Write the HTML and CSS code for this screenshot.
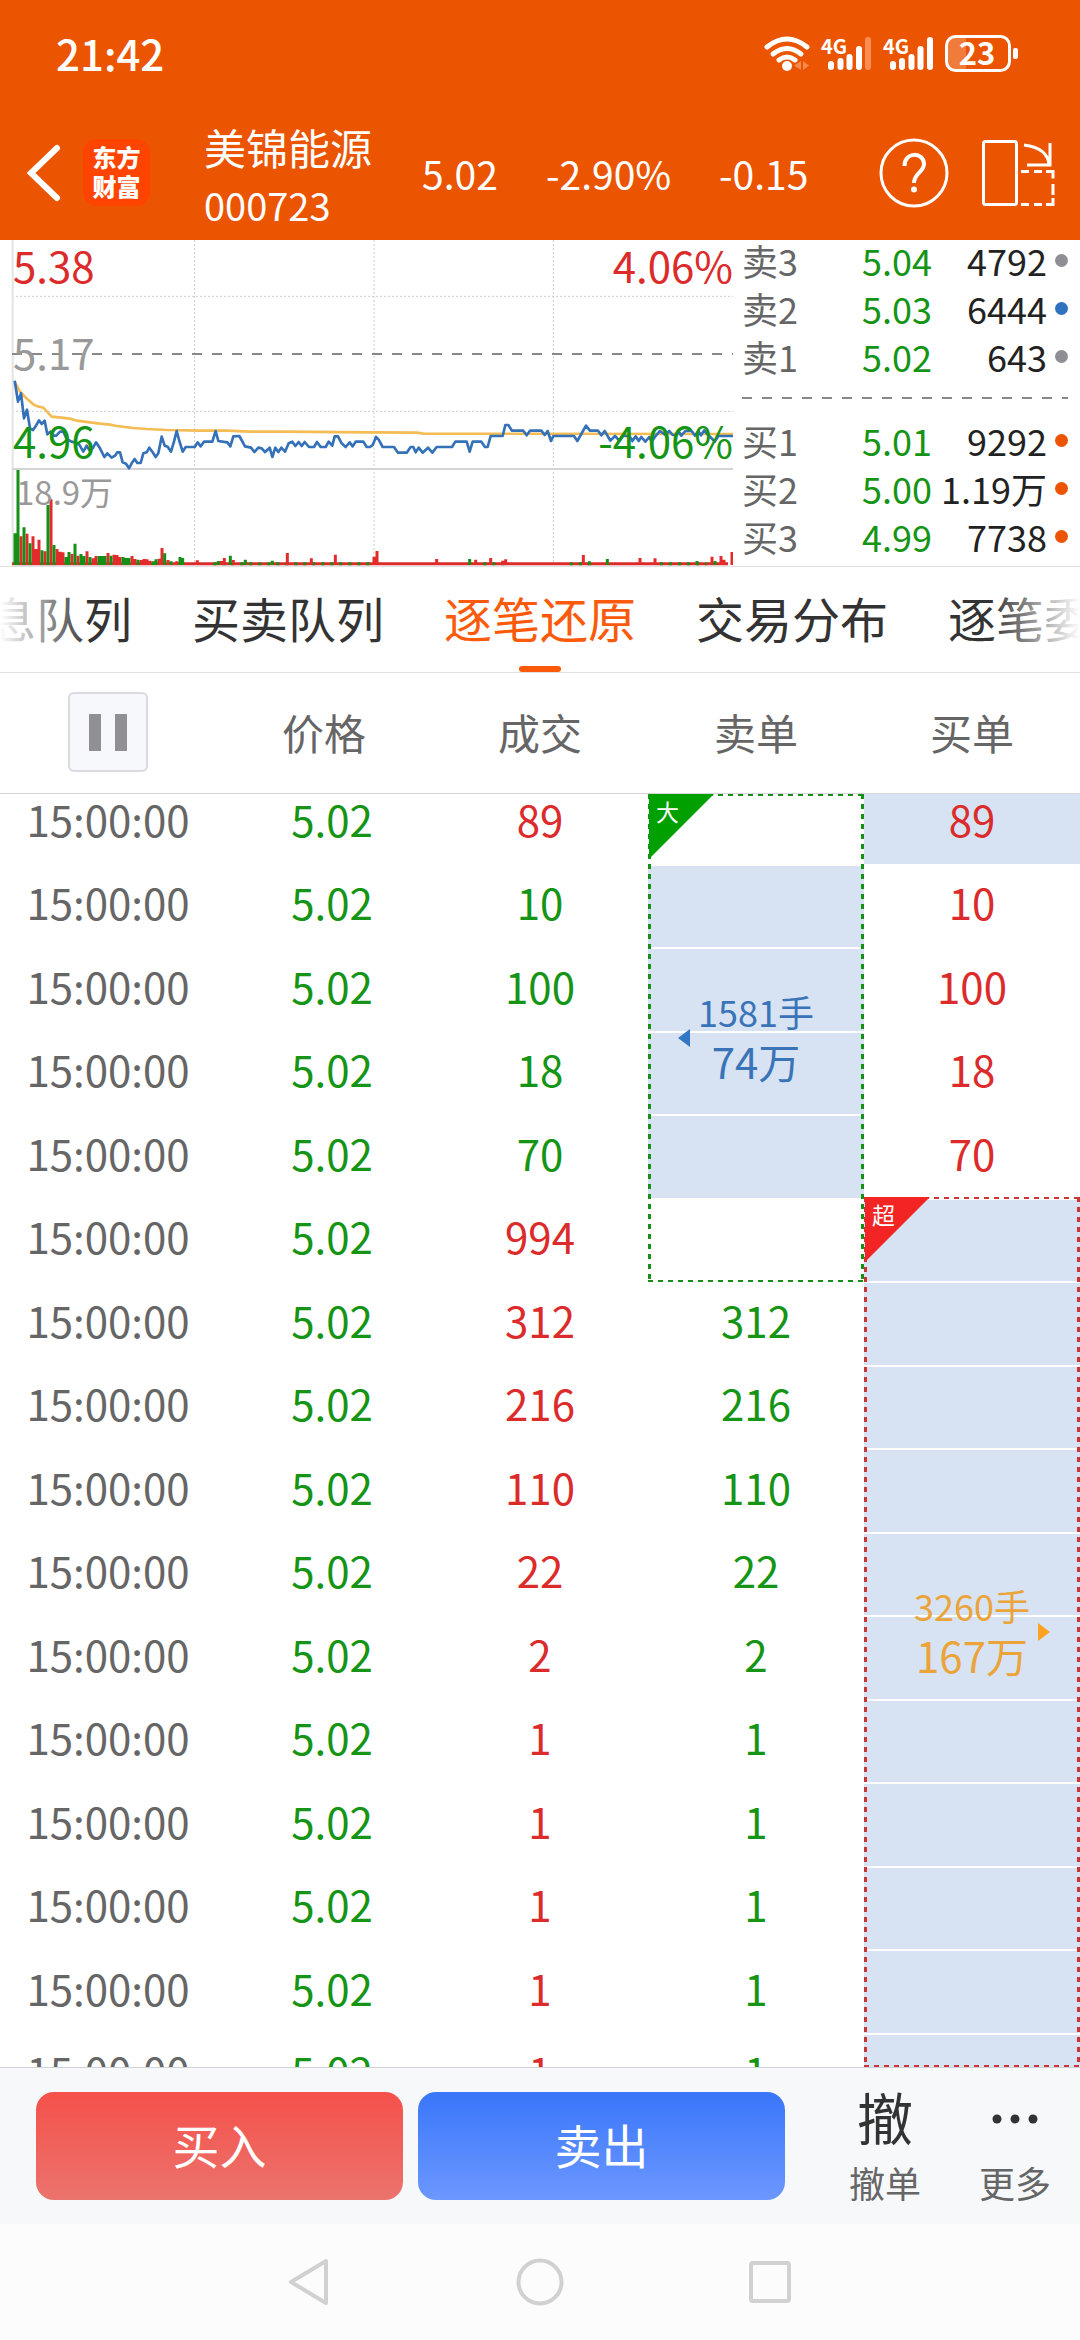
FILE: index.html
```html
<!doctype html>
<html lang="zh-CN">
    <head>
        <meta charset="utf-8">
        <title>美锦能源 000723</title>
        <meta name="viewport" content="width=device-width, initial-scale=1">
        <link rel="stylesheet" href="styles.css">
    </head>
    <body>
        <header class="header">
            <div class="status">
                <span class="clock">21:42</span>
                <svg class="status-icons" width="256" height="60" viewBox="764 23 256 60">
                    <g fill="none" stroke="#fff" stroke-width="5" stroke-linecap="round">
                        <path d="M767 47Q787 31 807 47"/>
                        <path d="M773 54Q787 43 801 54"/>
                        <path d="M779 60Q787 54 795 60"/>
                    </g>
                    <circle cx="787" cy="66" r="5" fill="#fff"/>
                    <path d="M801 61v9l-7-4.500zM803 61v9l6-4.500z" fill="#f58a4e"/>
                    <text class="net" x="821" y="54">4G</text>
                    <text class="net" x="883" y="54">4G</text>
                    <g stroke="#fff" stroke-width="6" stroke-linecap="round">
                        <path d="M831 64v3M840.500 61v6M849.500 57v10M859 49v18"/>
                        <path d="M868 40v27" stroke="#f98d52"/>
                        <path d="M893 64v3M902 61v6M911.500 57v10M920.500 49v18M930 40v27"/>
                    </g>
                    <path d="M966 37H957Q947 37 947 47V60Q947 70 957 70H966z" fill="#f07c3c"/>
                    <rect x="946.500" y="36.500" width="63" height="34" rx="9" fill="none" stroke="#fff" stroke-width="3"/>
                    <rect x="1013" y="48" width="5" height="11" rx="2" fill="#fff"/>
                    <text class="battery" x="977" y="65" text-anchor="middle">23</text>
                </svg>
            </div>
            <div class="stock">
                <button class="icon-button back" aria-label="返回">
                    <svg width="36" height="60" viewBox="0 0 36 60"><path d="M31 5L5 30L31 55" fill="none" stroke="#fff" stroke-width="6" stroke-linecap="round"/></svg>
                </button>
                <div class="logo">东方<br>财富</div>
                <h1 class="name">美锦能源<span class="code">000723</span></h1>
                <span>5.02</span>
                <span>-2.90%</span>
                <span>-0.15</span>
                <div class="tools">
                    <button class="icon-button" aria-label="帮助">
                        <svg width="70" height="70" viewBox="0 0 70 70" fill="none" stroke="#fff" stroke-width="3"><circle cx="35" cy="35" r="33"/><path d="M25.500 28C25.500 13 45 14 45 26C45 34 35 35 35 45" stroke-width="4"/><circle cx="35" cy="51.500" r="3" fill="#fff" stroke="none"/></svg>
                    </button>
                    <button class="icon-button" aria-label="横屏">
                        <svg width="74" height="70" viewBox="0 0 74 70" fill="none" stroke="#fff" stroke-width="3">
                            <rect x="2.500" y="3.500" width="33" height="63" rx="2"/>
                            <path d="M43 7Q67 10 68 27M69 5V27H46"/>
                            <path d="M40 33.500h8M53 33.500h8M65 33.500h7v7M72 46v11M72 60v6.500h-7M61 66.500h-8M48 66.500h-8"/>
                        </svg>
                    </button>
                </div>
            </div>
        </header>

        <section class="quote">
            <div class="chart">
                <!-- three units per pixel, one minute is 9 units wide -->
                <svg class="plot" viewBox="0 15 2199 978" preserveAspectRatio="none">
                    <g fill="none" stroke="#ccc" stroke-width="3" stroke-dasharray="6 6">
                        <path d="M36 184H2199M36 529H2199"/>
                        <path d="M584 15V990M1122 15V990M1660 15V990"/>
                    </g>
                    <path d="M38 15V990" stroke="#e3e3e3" stroke-width="6"/>
                    <path d="M36 702H2199" stroke="#d3d3d3" stroke-width="6"/>
                    <path d="M36 357H2199" stroke="#888" stroke-width="6" stroke-dasharray="30 30"/>

                    <path d="M36 986H2184" stroke="#db2b2b" stroke-width="9"/>
                    <path d="M640 986H1110M1450 986H1520M1710 986H1790M1980 986H2120" stroke="#158f15" stroke-width="9" stroke-dasharray="9 18"/>
                    <path d="M63 990V904M81 990V896M99 990V904M108 990V942M117 990V914M135 990V949M153 990V793M171 990V942M180 990V950M189 990V952M216 990V957M234 990V962M261 990V949M279 990V970M288 990V963M324 990V954M342 990V959M351 990V960M360 990V966M396 990V963M405 990V972M423 990V975M432 990V972M441 990V973M450 990V977M477 990V971M486 990V939M504 990V975M530 990V979M592 990V976M664 990V978M673 990V969M700 990V975M862 990V954M934 990V970M1006 990V959M1122 990V965M1131 990V948M1310 990V972M1427 990V974M1472 990V969M1508 990V977M1517 990V973M1750 990V960M1920 990V969M1965 990V970M2136 990V965M2163 990V963M2172 990V974M2196 990V951" stroke="#e22b2b" stroke-width="9"/>
                    <path d="M45 990V895M54 990V705M72 990V877M90 990V925M126 990V946M144 990V810M162 990V930M198 990V966M207 990V951M225 990V926M243 990V957M252 990V963M270 990V966M297 990V963M306 990V963M315 990V963M333 990V962M369 990V966M378 990V969M387 990V969M414 990V974M459 990V979M468 990V973M494 990V955M513 990V979M540 990V966M548 990V969M655 990V978M691 990V962M736 990V974M817 990V977M1409 990V972M1822 990V972M1768 990V979M2091 990V978M2145 990V978" stroke="#158f15" stroke-width="9"/>

                    <polyline fill="none" stroke="#f3bc55" stroke-width="8" points="44,440 58,467 75,486 100,508 112,514 130,518 155,545 185,548 210,551 230,557 270,562 300,566 330,569 350,573 400,579 440,582 500,585 600,587 680,587 750,590 850,590 1110,592 1250,593 1270,596 2199,597"/>
                    <polyline fill="none" stroke="#3471b8" stroke-width="8" stroke-linejoin="round" points="44,437 54,500 63,475 72,550 81,524 90,580 99,585 108,572 117,556 125,567 134,557 142,598 151,590 160,602 169,602 180,590 190,590 200,612 214,620 225,622 236,626 250,650 260,632 268,645 278,640 288,622 300,640 313,666 322,655 335,668 345,662 352,652 360,652 368,682 378,686 387,700 395,685 404,672 412,684 422,684 430,655 440,652 448,638 458,652 467,666 475,655 485,605 494,632 503,635 513,650 522,620 530,588 538,618 548,650 557,636 584,636 593,622 602,634 612,620 637,620 647,588 655,618 682,622 691,634 700,604 718,603 735,634 753,638 763,651 775,638 785,640 795,651 809,638 817,666 826,638 835,651 844,638 855,650 866,625 877,620 886,633 896,621 905,633 914,621 927,636 942,636 951,621 962,636 977,636 986,620 997,632 1004,604 1014,604 1025,625 1037,636 1049,622 1058,634 1067,620 1090,620 1100,636 1110,636 1118,630 1128,606 1136,614 1148,636 1182,636 1194,653 1220,653 1232,636 1240,636 1247,652 1256,638 1268,653 1284,638 1297,653 1310,636 1356,636 1366,620 1400,620 1409,650 1418,620 1444,620 1455,636 1463,636 1472,603 1508,603 1516,570 1525,570 1536,587 1570,587 1580,601 1590,587 1624,587 1634,600 1643,588 1653,618 1660,603 1722,603 1732,618 1758,572 1770,587 1794,587 1804,601 1814,588 1831,617 1845,603 1858,617 1868,603 1888,603 1897,618 1907,604 1916,618 1924,606 1936,620 1948,606 1955,620 1966,604 1980,588 1996,600 2008,588 2018,600 2026,600 2035,588 2044,602 2056,588 2075,588 2085,602 2095,588 2103,601 2113,586 2124,600 2135,610 2144,620 2155,603 2199,603"/>
                </svg>
                <span class="mark high up">5.38</span>
                <span class="mark high right up">4.06%</span>
                <span class="mark middle">5.17</span>
                <span class="mark low down">4.96</span>
                <span class="mark low right down">-4.06%</span>
                <span class="mark volume">18.9万</span>
            </div>
            <div class="book">
                <div class="level"><span class="side">卖3</span><span class="down">5.04</span><span class="amount">4792</span><i class="dot"></i></div>
                <div class="level"><span class="side">卖2</span><span class="down">5.03</span><span class="amount">6444</span><i class="dot blue"></i></div>
                <div class="level"><span class="side">卖1</span><span class="down">5.02</span><span class="amount">643</span><i class="dot"></i></div>
                <div class="spread"></div>
                <div class="level"><span class="side">买1</span><span class="down">5.01</span><span class="amount">9292</span><i class="dot orange"></i></div>
                <div class="level"><span class="side">买2</span><span class="down">5.00</span><span class="amount">1.19万</span><i class="dot orange"></i></div>
                <div class="level"><span class="side">买3</span><span class="down">4.99</span><span class="amount">7738</span><i class="dot orange"></i></div>
            </div>
        </section>

        <nav class="tabs">
            <a class="tab" href="#">息队列</a>
            <a class="tab" href="#">买卖队列</a>
            <a class="tab active" href="#">逐笔还原</a>
            <a class="tab" href="#">交易分布</a>
            <a class="tab" href="#">逐笔委托</a>
        </nav>

        <main class="ticks">
            <table class="list">
                <thead>
                    <tr>
                        <th><button class="pause" aria-label="暂停"><i></i><i></i></button></th>
                        <th>价格</th><th>成交</th><th>卖单</th><th>买单</th>
                    </tr>
                </thead>
                <tbody>
                    <tr><td>15:00:00</td><td>5.02</td><td class="up">89</td><td></td><td class="up big">89</td></tr>
                    <tr><td>15:00:00</td><td>5.02</td><td class="down">10</td><td class="big"></td><td class="up">10</td></tr>
                    <tr><td>15:00:00</td><td>5.02</td><td class="down">100</td><td class="big"></td><td class="up">100</td></tr>
                    <tr><td>15:00:00</td><td>5.02</td><td class="down">18</td><td class="big"></td><td class="up">18</td></tr>
                    <tr><td>15:00:00</td><td>5.02</td><td class="down">70</td><td class="big"></td><td class="up">70</td></tr>
                    <tr><td>15:00:00</td><td>5.02</td><td class="up">994</td><td></td><td class="big"></td></tr>
                    <tr><td>15:00:00</td><td>5.02</td><td class="up">312</td><td class="down">312</td><td class="big"></td></tr>
                    <tr><td>15:00:00</td><td>5.02</td><td class="up">216</td><td class="down">216</td><td class="big"></td></tr>
                    <tr><td>15:00:00</td><td>5.02</td><td class="up">110</td><td class="down">110</td><td class="big"></td></tr>
                    <tr><td>15:00:00</td><td>5.02</td><td class="up">22</td><td class="down">22</td><td class="big"></td></tr>
                    <tr><td>15:00:00</td><td>5.02</td><td class="up">2</td><td class="down">2</td><td class="big"></td></tr>
                    <tr><td>15:00:00</td><td>5.02</td><td class="up">1</td><td class="down">1</td><td class="big"></td></tr>
                    <tr><td>15:00:00</td><td>5.02</td><td class="up">1</td><td class="down">1</td><td class="big"></td></tr>
                    <tr><td>15:00:00</td><td>5.02</td><td class="up">1</td><td class="down">1</td><td class="big"></td></tr>
                    <tr><td>15:00:00</td><td>5.02</td><td class="up">1</td><td class="down">1</td><td class="big"></td></tr>
                    <tr><td>15:00:00</td><td>5.02</td><td class="up">1</td><td class="down">1</td><td class="big"></td></tr>
                </tbody>
            </table>
            <div class="order sell">
                <span class="corner">大</span>
                <span class="lots">1581手</span>
                <span>74万</span>
            </div>
            <div class="order buy">
                <span class="corner">超</span>
                <span class="lots">3260手</span>
                <span>167万</span>
            </div>
        </main>

        <footer class="actions">
            <button class="trade red">买入</button>
            <button class="trade blue">卖出</button>
            <a class="action first" href="#"><span class="action-icon">撤</span>撤单</a>
            <a class="action" href="#">
                <span class="action-icon"><svg width="46" height="10" viewBox="0 0 46 10" fill="#333"><circle cx="5" cy="5" r="4.500"/><circle cx="23" cy="5" r="4.500"/><circle cx="41" cy="5" r="4.500"/></svg></span>
                更多
            </a>
        </footer>

        <div class="system">
            <button class="icon-button" aria-label="后退"><svg width="48" height="48" viewBox="0 0 48 48"><path d="M5 24L40 3V45z"/></svg></button>
            <button class="icon-button" aria-label="主页"><svg width="48" height="48" viewBox="0 0 48 48"><circle cx="24" cy="24" r="21.500"/></svg></button>
            <button class="icon-button" aria-label="最近"><svg width="48" height="48" viewBox="0 0 48 48"><rect x="5" y="5" width="38" height="38" rx="2"/></svg></button>
        </div>
    </body>
</html>
```
FILE: styles.css
```css
* {
    box-sizing: border-box;
}

body {
    display: flex;
    flex-direction: column;
    height: 100vh;
    margin: 0;
    overflow: hidden;
    background-color: #fff;
    color: #333;
    font-family: "Noto Sans CJK SC", "Noto Sans", sans-serif;
    font-size: 42px;
}

a {
    color: inherit;
    text-decoration: none;
}

button {
    font-family: inherit;
    padding: 0;
    border: 0;
}

svg {
    display: block;
}

.icon-button {
    background: none;
}

.up {
    color: #db2b2b;
}

.down {
    color: #159415;
}

/* Header */

.header {
    background-color: #eb5502;
    color: #fff;
}

.status {
    display: flex;
    align-items: center;
    justify-content: space-between;
    height: 105px;
    padding: 0 60px 0 56px;
}

.clock {
    font-size: 42px;
    font-weight: 500;
}

.net {
    fill: #fff;
    font-size: 20px;
    font-weight: 700;
}

.battery {
    fill: #fff;
    font-size: 31px;
    font-weight: 700;
}

.stock {
    display: grid;
    grid-template-columns: 83px 121px 218fr 124fr 173fr 160fr 201px;
    align-items: center;
    height: 135px;
    font-size: 39px;
}

.back {
    padding-left: 26px;
}

.logo {
    width: 67px;
    height: 67px;
    padding-top: 3px;
    border-radius: 14px;
    background-color: #ff4400;
    font-size: 24px;
    font-weight: 900;
    line-height: 29px;
    text-align: center;
}

.name {
    margin: 0;
    padding-top: 6px;
    font-size: 42px;
    font-weight: 400;
    line-height: 58px;
}

.code {
    display: block;
    font-size: 38px;
}

.tools {
    display: flex;
    gap: 32px;
}

/* Intraday chart and order book */

.quote {
    display: grid;
    grid-template-columns: 733fr 347fr;
    height: 327px;
    border-bottom: 1px solid #e0e0e0;
}

.chart {
    position: relative;
}

.plot {
    width: 100%;
    height: 326px;
}

.mark {
    position: absolute;
    left: 13px;
    line-height: 48px;
}

.mark.right {
    right: 0;
    left: auto;
}

.high {
    top: 1px;
}

.middle {
    top: 88px;
    color: #999;
}

.low {
    top: 176px;
}

.volume {
    top: 227px;
    left: 16px;
    color: #999;
    font-size: 33px;
}

.book {
    margin-top: -4px;
    padding: 0 12px 0 9px;
    font-size: 36px;
    line-height: 48px;
}

.level {
    display: grid;
    grid-template-columns: 120px 70px 1fr 13px;
    align-items: center;
    color: #222;
}

.level .down {
    color: #159415;
}

.side {
    color: #666;
}

.amount {
    justify-self: end;
    padding-right: 8px;
}

.dot {
    width: 13px;
    height: 13px;
    border-radius: 50%;
    background-color: #8f8e94;
}

.dot.blue {
    background-color: #3072c0;
}

.dot.orange {
    background-color: #eb5502;
}

.spread {
    height: 2px;
    margin: 17px 0;
    background: repeating-linear-gradient(90deg, #888 0 10px, transparent 10px 20px);
}

/* Tabs */

.tabs {
    position: relative;
    display: flex;
    justify-content: center;
    gap: 60px;
    height: 106px;
    overflow: hidden;
    border-bottom: 1px solid #e0e0e0;
    font-size: 48px;
    line-height: 100px;
}

.tabs::after {
    content: "";
    position: absolute;
    inset: 0;
    background: linear-gradient(90deg, #fff, transparent 90px, transparent calc(100% - 90px), #fff);
    pointer-events: none;
}

.tab {
    flex: none;
    position: relative;
    width: 192px;
    text-align: right;
    white-space: nowrap;
}

.tab.active {
    color: #fa5a0a;
}

.tab.active::after {
    content: "";
    position: absolute;
    bottom: 0;
    left: 75px;
    width: 42px;
    height: 6px;
    border-radius: 3px;
    background-color: #fa5a0a;
}

/* Tick list */

.ticks {
    position: relative;
    flex: 1;
    min-height: 0;
    overflow: hidden;
}

.list {
    width: 100%;
    table-layout: fixed;
    border-spacing: 0;
    line-height: 50px;
    text-align: center;
}

.list th {
    height: 121px;
    padding: 0 0 2px;
    border-bottom: 1px solid #d6d6d6;
    color: #666;
    font-weight: 400;
}

.list td {
    height: 84px;
    padding: 0 0 20px;
    border-bottom: 2px solid #fff;
    vertical-align: bottom;
}

.list tr:nth-child(even) td {
    height: 83px;
}

/* the list is scrolled part of the way into its first row */
.list tr:first-child td {
    height: 71px;
}

.list td:nth-child(1) {
    color: #666;
}

.list td:nth-child(2) {
    padding-left: 16px;
    color: #159415;
}

.list .big {
    background-color: #d7e3f2;
    background-clip: padding-box;
}

.pause {
    display: flex;
    align-items: center;
    justify-content: center;
    gap: 14px;
    width: 80px;
    height: 80px;
    margin: 0 auto;
    border: 2px solid #d8dbe0;
    border-radius: 6px;
    background-color: #f7f8fb;
}

.pause i {
    width: 12px;
    height: 37px;
    background-color: #908f94;
}

/* frame of short dashes round a big order */
.order {
    --across: repeating-linear-gradient(90deg, var(--line) 0 5px, transparent 5px 10px);
    --along: repeating-linear-gradient(var(--line) 0 5px, transparent 5px 10px);
    position: absolute;
    display: flex;
    flex-direction: column;
    align-items: center;
    justify-content: center;
    width: 20%;
    padding-bottom: 5px;
    background:
        var(--across) top / 100% 2px no-repeat,
        var(--across) bottom / 100% 2px no-repeat,
        var(--along) left / 3px 100% no-repeat,
        var(--along) right / 3px 100% no-repeat;
    line-height: 49px;
}

.order.sell {
    --line: #158f15;
    top: 121px;
    left: 60%;
    height: 488px;
    color: #3a74b8;
}

.order.buy {
    --line: #c93636;
    top: 524px;
    right: 0;
    bottom: 0;
    color: #eba43a;
}

.lots {
    font-size: 36px;
}

.corner {
    position: absolute;
    top: 0;
    left: 1px;
    width: 65px;
    height: 65px;
    padding-left: 7px;
    clip-path: polygon(0 0, 100% 0, 0 100%);
    background-color: #00a000;
    color: #fff;
    font-size: 23px;
    line-height: 34px;
}

.buy .corner {
    background-color: #f32424;
}

.order::after {
    content: "";
    position: absolute;
    top: calc(50% - 9px);
    border: 9px solid transparent;
}

.sell::after {
    left: 30px;
    border-right: 12px solid #3376c4;
    border-left: 0;
}

.buy::after {
    right: 30px;
    border-right: 0;
    border-left: 12px solid #fca321;
}

/* Bottom bar */

.actions {
    display: flex;
    height: 157px;
    padding: 24px 0 24px 36px;
    border-top: 1px solid #d0d3d8;
    background-color: #f6f8fa;
}

.trade {
    flex: 1;
    padding-bottom: 6px;
    border-radius: 18px;
    color: #fff;
    font-size: 47px;
}

.trade.red {
    margin-right: 15px;
    background: linear-gradient(#f4514a, #ec736d);
}

.trade.blue {
    background: linear-gradient(#3a76fa, #6c98ff);
}

.action {
    width: 130px;
    color: #666;
    font-size: 36px;
    line-height: 52px;
    text-align: center;
}

.action.first {
    margin-left: 35px;
}

.action-icon {
    display: flex;
    align-items: center;
    justify-content: center;
    height: 54px;
    margin-bottom: 10px;
    color: #333;
    font-size: 56px;
    line-height: 48px;
}

.action:first-of-type .action-icon {
    padding-bottom: 6px;
}

.system {
    display: flex;
    align-items: center;
    justify-content: center;
    gap: 182px;
    height: 116px;
    background-color: #fcfcfc;
}

.system svg {
    fill: none;
    stroke: #d1d1d1;
    stroke-width: 4;
    stroke-linejoin: round;
}
```
